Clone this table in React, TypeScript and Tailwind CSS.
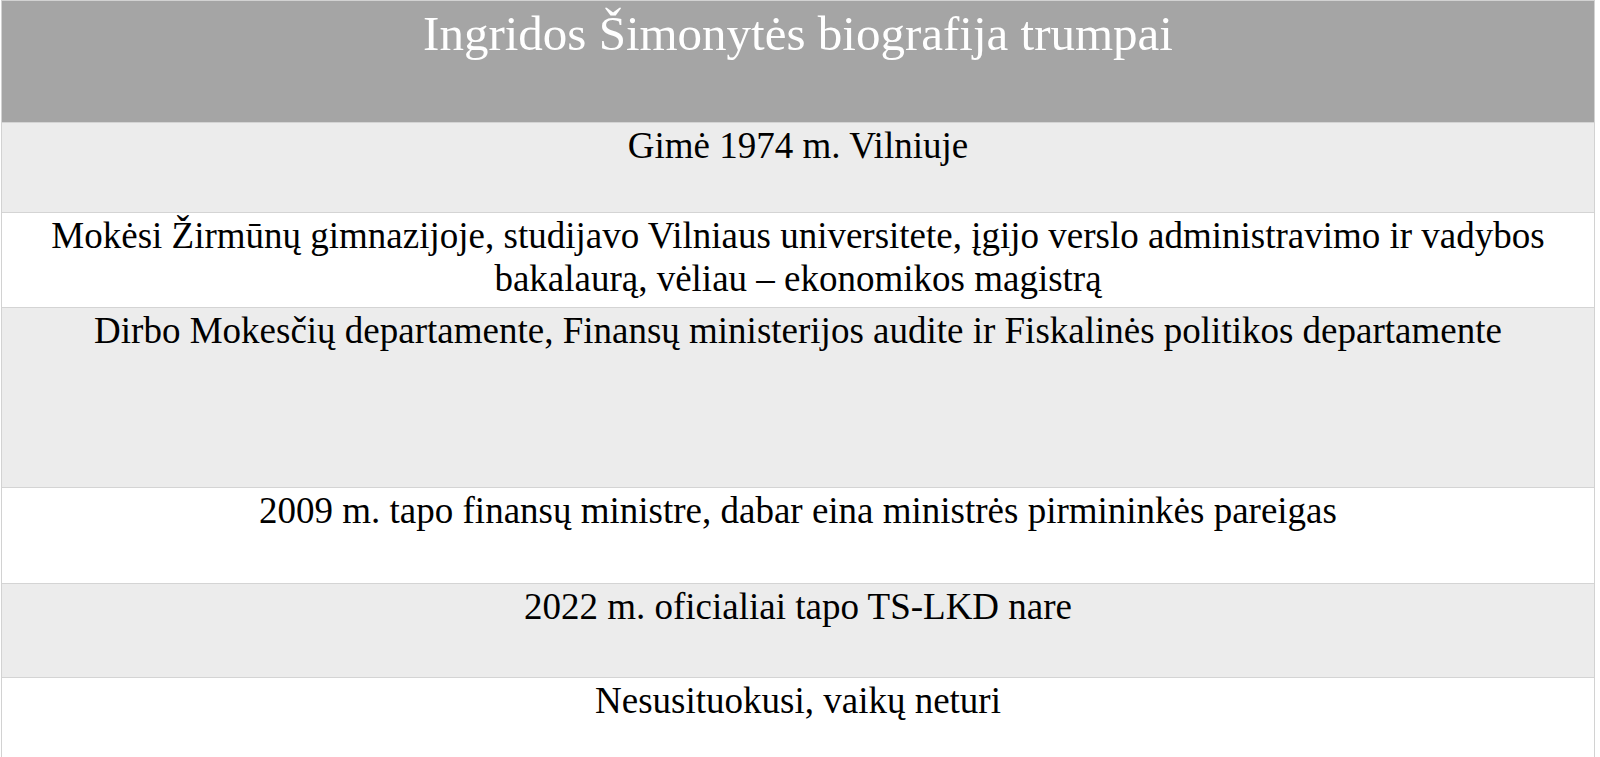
import React from "react";

const rows: { text: React.ReactNode; h: string; bg: string }[] = [
  { text: "Gimė 1974 m. Vilniuje", h: "h-[90px]", bg: "bg-[#ececec]" },
  {
    text: (
      <>
        Mokėsi Žirmūnų gimnazijoje, studijavo Vilniaus universitete, įgijo verslo administravimo ir vadybos
        <br />
        bakalaurą, vėliau – ekonomikos magistrą
      </>
    ),
    h: "h-[95px]",
    bg: "bg-white",
  },
  {
    text: "Dirbo Mokesčių departamente, Finansų ministerijos audite ir Fiskalinės politikos departamente",
    h: "h-[180px]",
    bg: "bg-[#ececec]",
  },
  {
    text: "2009 m. tapo finansų ministre, dabar eina ministrės pirmininkės pareigas",
    h: "h-[96px]",
    bg: "bg-white",
  },
  { text: "2022 m. oficialiai tapo TS-LKD nare", h: "h-[94px]", bg: "bg-[#ececec]" },
  { text: "Nesusituokusi, vaikų neturi", h: "h-[95px]", bg: "bg-white" },
];

export default function App() {
  return (
    <div className="w-[1600px] h-[757px] overflow-hidden bg-white" style={{ fontFamily: '"Liberation Serif", "Times New Roman", serif' }}>
      <div className="ml-[1px] w-[1594px] border-x border-t border-[#d2d2d2] flex flex-col">
        <div className="h-[121px] shrink-0 bg-[#a5a5a5] text-white text-center text-[49px] leading-[56px] pt-[5px]">
          Ingridos Šimonytės biografija trumpai
        </div>
        {rows.map((r, i) => (
          <div
            key={i}
            className={`${r.h} ${r.bg} shrink-0 border-t border-[#d4d4d4] text-black text-center text-[37px] leading-[43px] pt-[1px]`}
          >
            {r.text}
          </div>
        ))}
      </div>
    </div>
  );
}
